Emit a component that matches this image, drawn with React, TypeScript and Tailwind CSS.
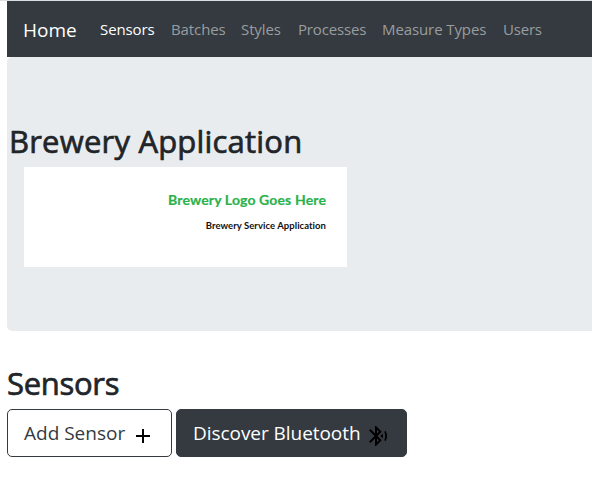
import React from "react";

const links = [
  { label: "Sensors", cls: "w-[55px] text-white tracking-[-0.1px]" },
  { label: "Batches", cls: "w-[54px] text-[#9a9d9f] tracking-[-0.1px]" },
  { label: "Styles", cls: "w-[41px] text-[#9a9d9f] tracking-[-0.1px]" },
  { label: "Processes", cls: "w-[68px] text-[#9a9d9f] tracking-[-0.15px]" },
  { label: "Measure Types", cls: "w-[105px] text-[#9a9d9f] tracking-[-0.1px]" },
  { label: "Users", cls: "w-[40px] text-[#9a9d9f] tracking-[-0.2px]" },
];

function PlusIcon() {
  return (
    <svg className="mt-[5px] h-6 w-6 shrink-0" viewBox="0 0 24 24" fill="#000">
      <path d="M19 13h-6v6h-2v-6H5v-2h6V5h2v6h6v2z" />
    </svg>
  );
}

function BluetoothIcon() {
  return (
    <svg className="mt-[5px] h-6 w-6 shrink-0" viewBox="0 0 24 24" fill="#000">
      <path d="M14.24 12.01l2.32 2.32c.28-.72.44-1.51.44-2.33 0-.82-.16-1.59-.43-2.31l-2.33 2.32zm5.29-5.3l-1.26 1.26c.63 1.21.98 2.57.98 4.02s-.36 2.82-.98 4.02l1.2 1.2c.97-1.54 1.54-3.36 1.54-5.31-.01-1.89-.55-3.67-1.48-5.19zm-3.82 1L10 2H9v7.59L4.41 5 3 6.41 8.59 12 3 17.59 4.41 19 9 14.41V22h1l5.71-5.71-4.3-4.29 4.3-4.29zM11 5.83l1.88 1.88L11 9.59V5.83zm1.88 10.46L11 18.17v-3.76l1.88 1.88z" />
    </svg>
  );
}

export default function App() {
  return (
    <div className="h-[492px] w-[592px] overflow-hidden border-t border-[#dcdde0] bg-white pl-[7px] font-['Open_Sans','Noto_Sans',sans-serif] text-[#212529]">
      <nav className="flex h-14 items-center bg-[#343a40] pl-4 whitespace-nowrap">
        <a className="mt-px mr-[23px] w-[54px] text-[19px] leading-[30px] text-white">Home</a>
        <div className="flex gap-4 text-[15px] leading-6">
          {links.map((l) => (
            <a key={l.label} className={l.cls}>
              {l.label}
            </a>
          ))}
        </div>
      </nav>
      <header className="h-[274px] rounded-l-[5px] bg-[#e9ecef] pt-[65px]">
        <h1 className="pl-[2px] text-[31px] leading-[38px] tracking-[0.2px] whitespace-nowrap [-webkit-text-stroke:0.7px_#212529]">Brewery Application</h1>
        <div className="mt-[7px] ml-[17px] flex h-[100px] w-[323px] flex-col items-end bg-white pt-[24px] pr-[21px] font-['Lato',sans-serif] font-bold whitespace-nowrap">
          <div className="text-[14px] leading-[18px] tracking-[0.13px] text-[#2bb24c] [-webkit-text-stroke:0.2px_#2bb24c]">Brewery Logo Goes Here</div>
          <div className="mt-[10px] text-[9.5px] leading-[14px] tracking-[0.05px] text-[#111]">Brewery Service Application</div>
        </div>
      </header>
      <h2 className="mt-[33px] text-[31px] leading-[38px] tracking-[-0.3px] [-webkit-text-stroke:0.7px_#212529]">Sensors</h2>
      <div className="mt-[7px] flex gap-1 whitespace-nowrap">
        <button className="flex h-12 w-[165px] items-center rounded-[5px] border border-[#343a40] pl-4 text-[19px] text-[#343a40]">
          <span className="mt-px w-[107px] text-left">Add Sensor</span>
          <PlusIcon />
        </button>
        <button className="flex h-12 w-[231px] items-center rounded-[5px] border border-[#343a40] bg-[#343a40] pl-4 text-[19px] text-white">
          <span className="mt-px w-[173px] text-left tracking-[-0.05px]">Discover Bluetooth</span>
          <BluetoothIcon />
        </button>
      </div>
    </div>
  );
}
